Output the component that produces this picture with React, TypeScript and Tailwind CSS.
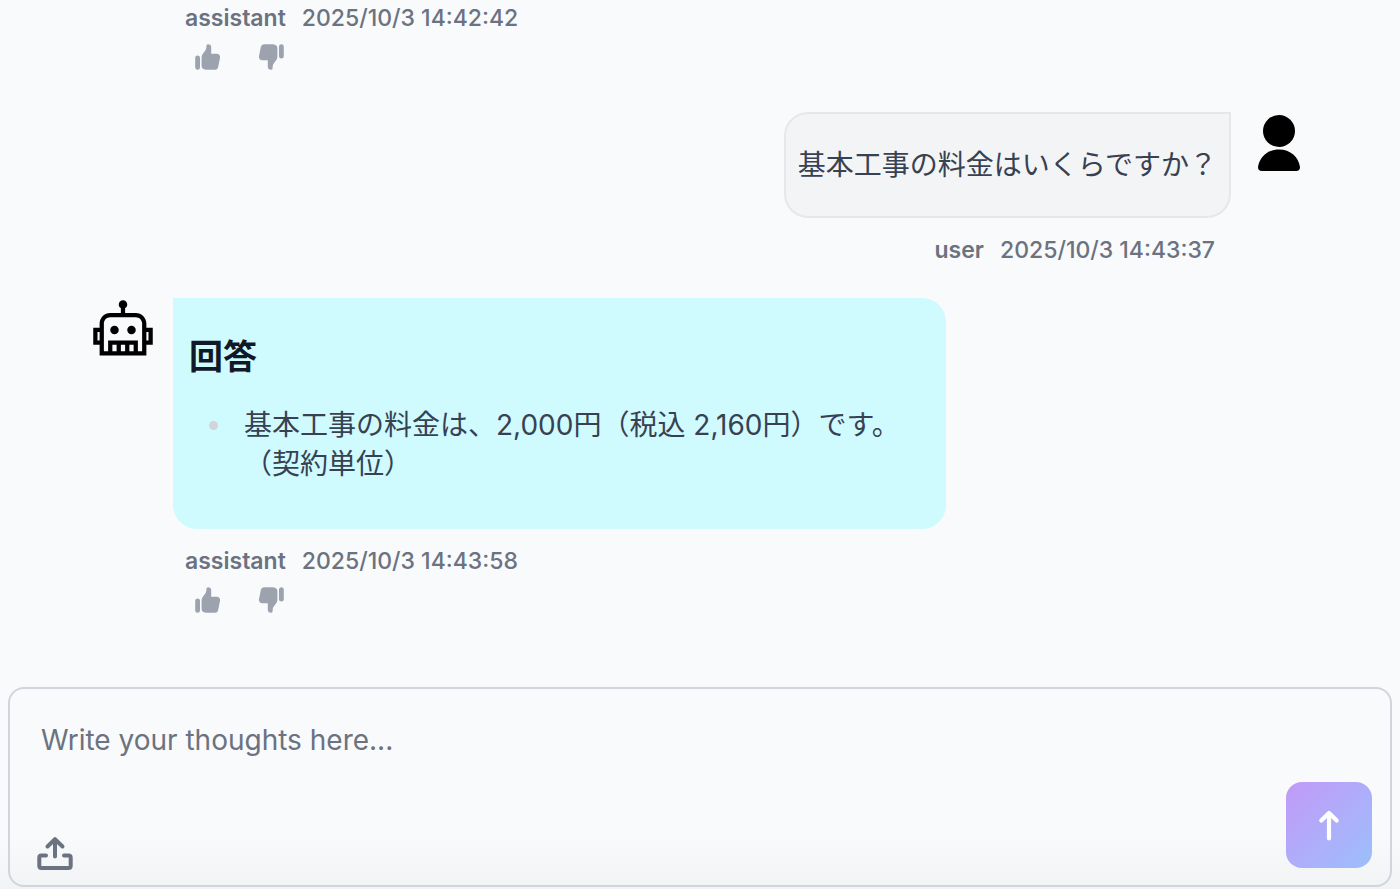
import { useState } from "react";
import { HiThumbUp, HiThumbDown } from "react-icons/hi";
import { LiaRobotSolid } from "react-icons/lia";

function UserIcon() {
  return (
    <svg viewBox="0 0 42 56" className="h-14 w-[42px]" fill="currentColor" aria-hidden="true">
      <circle cx="21" cy="16" r="16" />
      <path d="M0 52C1.500 42 9.500 34.500 21 34.500S40.500 42 42 52Q42 56 38 56H4Q0 56 0 52Z" />
    </svg>
  );
}

function UploadIcon() {
  return (
    <svg
      viewBox="0 0 36 36"
      className="size-9"
      fill="none"
      stroke="currentColor"
      strokeWidth="4"
      strokeLinecap="round"
      strokeLinejoin="round"
      aria-hidden="true"
    >
      <path d="M18 20.500V3.500M10.500 10.500L18 3.200L25.500 10.500" />
      <path d="M9 19.500H4.500Q2.300 19.500 2.300 21.700V29.800Q2.300 32 4.500 32H31.500Q33.700 32 33.700 29.800V21.700Q33.700 19.500 31.500 19.500H27" />
    </svg>
  );
}

function ArrowIcon() {
  return (
    <svg
      viewBox="0 0 24 34"
      className="h-[34px] w-6"
      fill="none"
      stroke="currentColor"
      strokeWidth="4.200"
      strokeLinecap="round"
      strokeLinejoin="round"
      aria-hidden="true"
    >
      <path d="M12 30.500V5.500M4.300 12.500L12 5L19.700 12.500" />
    </svg>
  );
}

function Meta({ name, time }: { name: string; time: string }) {
  return (
    <div className="flex gap-4 text-[23px] leading-8 text-[#6b7280]">
      <span className="font-semibold">{name}</span>
      <time className="font-medium">{time}</time>
    </div>
  );
}

function Feedback() {
  return (
    <div className="mt-[7px] flex gap-[31px] pl-[19px] text-[#9ca3af]">
      <button type="button" aria-label="Good response">
        <HiThumbUp className="size-8" />
      </button>
      <button type="button" aria-label="Bad response">
        <HiThumbDown className="size-8" />
      </button>
    </div>
  );
}

export default function App() {
  const [text, setText] = useState("");
  return (
    <div className="flex min-h-screen flex-col bg-[#f9fafc] bg-[linear-gradient(to_top,#f2f3f5,#f9fafc_56px)] font-[Inter,'Noto_Sans_CJK_JP',sans-serif] text-[#374151]">
      <main className="flex grow flex-col pt-0.5 pr-[100px] pl-[89px]">
        <article className="pl-[84px]">
          <div className="pl-3">
            <Meta name="assistant" time="2025/10/3 14:42:42" />
          </div>
          <Feedback />
        </article>

        <article className="mt-[39px] flex justify-end gap-[27px]">
          <div className="flex flex-col items-end">
            <div className="rounded-3xl rounded-tr-none border-2 border-[#e5e7eb] bg-[#f3f4f6] px-3 py-[31px] text-[28px] leading-10">
              <p>基本工事の料金はいくらですか？</p>
            </div>
            <div className="mt-4 pr-4">
              <Meta name="user" time="2025/10/3 14:43:37" />
            </div>
          </div>
          <div className="pt-[3px] text-black">
            <UserIcon />
          </div>
        </article>

        <article className="mt-8 flex gap-4">
          <div className="text-black">
            <LiaRobotSolid className="size-[68px]" />
          </div>
          <div className="max-w-[773px] grow">
            <div className="rounded-3xl rounded-tl-none bg-[#cffafe] px-4 pt-[33px] pb-[45px]">
              <h2 className="text-[34px] leading-[52px] font-bold text-[#111827]">回答</h2>
              <ul className="mt-[23px] text-[28px] leading-[39px]">
                <li className="flex gap-[26px] pl-5">
                  <span className="mt-[15px] size-[9px] shrink-0 rounded-full bg-[#d1d5db]" />
                  <span>
                    基本工事の料金は、2,000円（税込 2,160円）です。
                    <br />
                    （契約単位）
                  </span>
                </li>
              </ul>
            </div>
            <div className="mt-4 pl-3">
              <Meta name="assistant" time="2025/10/3 14:43:58" />
            </div>
            <Feedback />
          </div>
        </article>
      </main>

      <form
        className="mx-2 mt-[70px] mb-0.5 flex flex-col rounded-2xl border-2 border-[#d1d5db]"
        onSubmit={(e) => e.preventDefault()}
      >
        <textarea
          aria-label="Message"
          rows={1}
          value={text}
          onChange={(e) => setText(e.target.value)}
          placeholder="Write your thoughts here..."
          className="mx-[31px] mt-[31px] h-10 resize-none bg-transparent text-[28px] leading-10 outline-none placeholder:text-[#6b7280]"
        />
        <div className="mt-[22px] flex items-end justify-between pr-[18px] pb-[17px] pl-[27px]">
          <button type="button" aria-label="Upload file" className="-mb-1 text-[#6b7280]">
            <UploadIcon />
          </button>
          <button
            type="submit"
            aria-label="Send"
            className="flex size-[86px] items-center justify-center rounded-2xl bg-linear-to-br from-[#c099f8] to-[#9abffb] text-white"
          >
            <ArrowIcon />
          </button>
        </div>
      </form>
    </div>
  );
}
